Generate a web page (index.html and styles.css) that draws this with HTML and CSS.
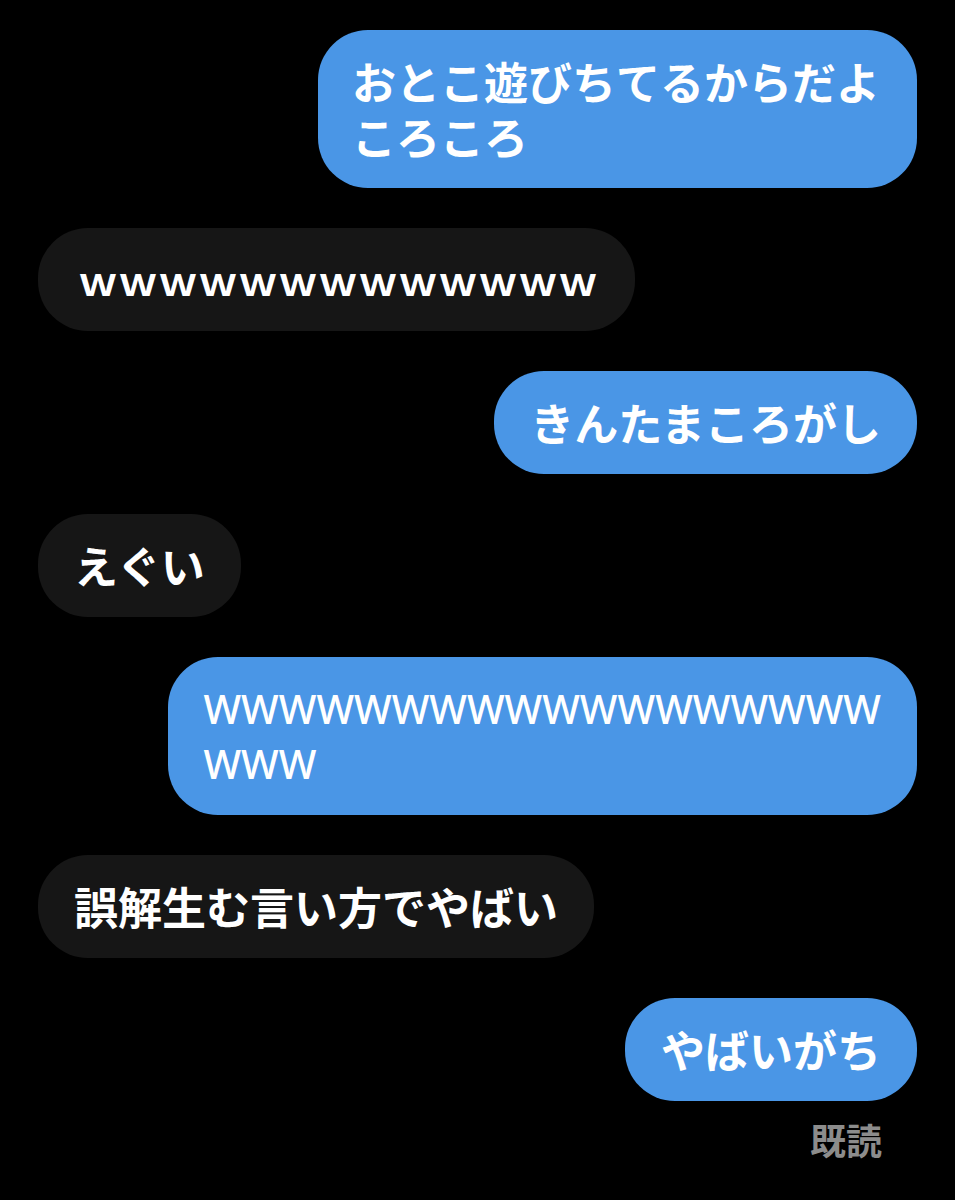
FILE: index.html
```html
<!DOCTYPE html>
<html lang="ja">
<head>
    <meta charset="UTF-8">
    <meta name="viewport" content="width=device-width, initial-scale=1.0">
    <title>トーク</title>
    <link rel="stylesheet" href="styles.css">
</head>
<body>
    <div class="chat">
        <div class="msg sent tight">おとこ遊びちてるからだよ<br>ころころ</div>
        <div class="msg recv wide">ｗｗｗｗｗｗｗｗｗｗｗｗｗ</div>
        <div class="msg sent">きんたまころがし</div>
        <div class="msg recv">えぐい</div>
        <div class="msg sent latin">WWWWWWWWWWWWWWWWWW<br>WWW</div>
        <div class="msg recv">誤解生む言い方でやばい</div>
        <div class="msg sent">やばいがち</div>
        <div class="read">既読</div>
    </div>
</body>
</html>
```

FILE: styles.css
```css
body {
    margin: 0;
    padding: 0;
    background-color: #000;
    font-family: "Noto Sans CJK JP", "Noto Sans", sans-serif;
    color: #fff;
}
.chat {
    display: flex;
    flex-direction: column;
    gap: 40px;
    padding: 30px 38px;
}
.msg {
    font-size: 44px;
    font-weight: 700;
    line-height: 55px;
    padding: 24px 36px;
    border-radius: 50px;
    white-space: nowrap;
}
.sent {
    align-self: flex-end;
    background-color: #4a96e6;
}
.recv {
    align-self: flex-start;
    background-color: #161616;
}
.tight {
    padding-left: 34px;
    padding-right: 37px;
}
.wide {
    font-size: 40px;
    padding-left: 40px;
    padding-right: 37px;
}
.latin {
    font-family: "Noto Sans", sans-serif;
    font-size: 40px;
    font-weight: 500;
    padding-left: 35px;
}
.read {
    align-self: flex-end;
    margin-top: -22px;
    margin-right: 35px;
    font-size: 36px;
    font-weight: 700;
    line-height: 40px;
    color: #8c8c8c;
}
```
